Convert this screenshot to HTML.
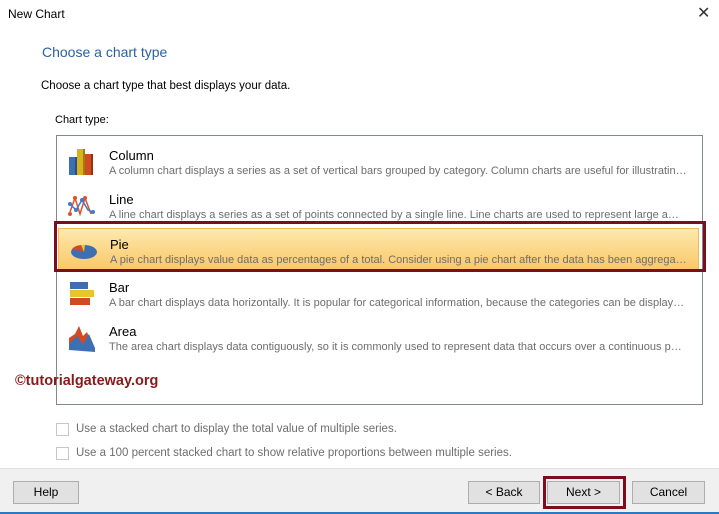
<!DOCTYPE html>
<html><head><meta charset="utf-8"><style>
*{margin:0;padding:0;box-sizing:border-box}
body{width:719px;height:514px;background:#fff;font-family:"Liberation Sans",sans-serif;position:relative;overflow:hidden;color:#000}
.a{position:absolute;white-space:nowrap}
.list{position:absolute;left:56px;top:135px;width:647px;height:270px;border:1px solid #828790}
.item{position:absolute;left:0;width:645px;height:42px}
.item .n{position:absolute;left:52px;top:8px;font-size:13px;color:#000}
.item .d{position:absolute;left:52px;top:25px;font-size:11px;color:#6d6d6d;width:578px;overflow:hidden;text-overflow:ellipsis;white-space:nowrap}
.item svg{position:absolute;left:10px;top:6px}
.sel{background:linear-gradient(#fde9ae,#fbd88a 50%,#fbc869);border:1px solid #f2b85c}
.btn{position:absolute;top:481px;height:23px;background:#e1e1e1;border:1px solid #adadad;font-size:12px;text-align:center;line-height:21px}
.cb{position:absolute;left:56px;width:13px;height:13px;border:1px solid #c8c8c8;background:#fff}
.cl{position:absolute;left:76px;font-size:11.5px;color:#6d6d6d}
</style></head><body>
<div class="a" style="left:8px;top:7px;font-size:12px">New Chart</div>
<div class="a" style="left:697px;top:3px;font-size:16px;color:#333">✕</div>
<div class="a" style="left:42px;top:44px;font-size:14px;color:#2a5fa8">Choose a chart type</div>
<div class="a" style="left:41px;top:80px;font-size:11.5px">Choose a chart type that best displays your data.</div>
<div class="a" style="left:55px;top:114px;font-size:11px">Chart type:</div>
<div class="list">
 <div class="item" style="top:4px"><svg width="30" height="32" viewBox="0 0 30 32"><rect x="2" y="11" width="6" height="18" fill="#3f6fb3"/><rect x="10" y="3" width="6" height="26" fill="#d9b21b"/><rect x="18" y="8" width="6" height="21" fill="#d24a22"/><rect x="8" y="11" width="2" height="18" fill="#2a4f85"/><rect x="16" y="3" width="2" height="26" fill="#9d7f10"/><rect x="24" y="8" width="2" height="21" fill="#9a2f12"/></svg><div class="n">Column</div><div class="d">A column chart displays a series as a set of vertical bars grouped by category. Column charts are useful for illustrating comparisons</div></div>
 <div class="item" style="top:48px"><svg width="30" height="32" viewBox="0 0 30 32"><polyline points="3,22 8,8 13,24 18,8 24,24" fill="none" stroke="#e0502a" stroke-width="1.5"/><polyline points="3,14 9,20 15,10 21,20 26,22" fill="none" stroke="#3f7ad0" stroke-width="1.5"/><g fill="#3f7ad0"><circle cx="3" cy="14" r="2"/><circle cx="15" cy="10" r="2"/><circle cx="26" cy="22" r="2"/><circle cx="9" cy="20" r="2"/></g><g fill="#e0502a"><circle cx="8" cy="8" r="2"/><circle cx="18" cy="8" r="2"/><circle cx="3" cy="24" r="2"/></g></svg><div class="n">Line</div><div class="d">A line chart displays a series as a set of points connected by a single line. Line charts are used to represent large amounts of data</div></div>
 <div class="item sel" style="top:92px;left:1px;width:641px"><svg width="32" height="32" viewBox="0 0 32 32"><ellipse cx="15" cy="17" rx="13" ry="7" fill="#3f6fb3"/><path d="M15 17 L3 14 A13 7 0 0 1 12 10 Z" fill="#d24a22"/><path d="M15 17 L12 10 A13 7 0 0 1 16 10 Z" fill="#e8c52a"/></svg><div class="n" style="left:51px">Pie</div><div class="d" style="left:51px">A pie chart displays value data as percentages of a total. Consider using a pie chart after the data has been aggregated into seven or fewer points</div></div>
 <div class="item" style="top:136px"><svg width="32" height="32" viewBox="0 0 32 32"><rect x="3" y="4" width="18" height="7" fill="#3f6fb3"/><rect x="3" y="12" width="24" height="7" fill="#e8c52a"/><rect x="3" y="20" width="20" height="7" fill="#d24a22"/></svg><div class="n">Bar</div><div class="d">A bar chart displays data horizontally. It is popular for categorical information, because the categories can be displayed horizontally</div></div>
 <div class="item" style="top:180px"><svg width="32" height="32" viewBox="0 0 32 32"><path d="M2 28 L2 16 L8 12 L12 4 L16 14 L20 10 L24 20 L28 28Z" fill="#d24a22"/><path d="M2 28 L2 22 L10 14 L16 22 L22 12 L28 26 L28 30Z" fill="#3f6fb3"/></svg><div class="n">Area</div><div class="d">The area chart displays data contiguously, so it is commonly used to represent data that occurs over a continuous period of time</div></div>
</div>
<div class="a" style="left:54px;top:221px;width:652px;height:51px;border:3px solid #7b0e1c"></div>
<div class="a" style="left:15px;top:373px;font-size:14.5px;font-weight:bold;color:#8b1a1a">©tutorialgateway.org</div>
<div class="cb" style="top:423px"></div><div class="cl a" style="top:423px">Use a stacked chart to display the total value of multiple series.</div>
<div class="cb" style="top:447px"></div><div class="cl a" style="top:447px">Use a 100 percent stacked chart to show relative proportions between multiple series.</div>
<div class="a" style="left:0;top:468px;width:719px;height:46px;background:#f0f0f0;border-top:1px solid #dfdfdf"></div>
<div class="btn" style="left:13px;width:66px">Help</div>
<div class="btn" style="left:468px;width:72px">&lt; Back</div>
<div class="btn" style="left:547px;width:73px">Next &gt;</div>
<div class="btn" style="left:632px;width:73px">Cancel</div>
<div class="a" style="left:543px;top:476px;width:83px;height:33px;border:3px solid #7b0e1c"></div>
<div class="a" style="left:0;top:512px;width:719px;height:2px;background:#2b79c2"></div>
</body></html>
